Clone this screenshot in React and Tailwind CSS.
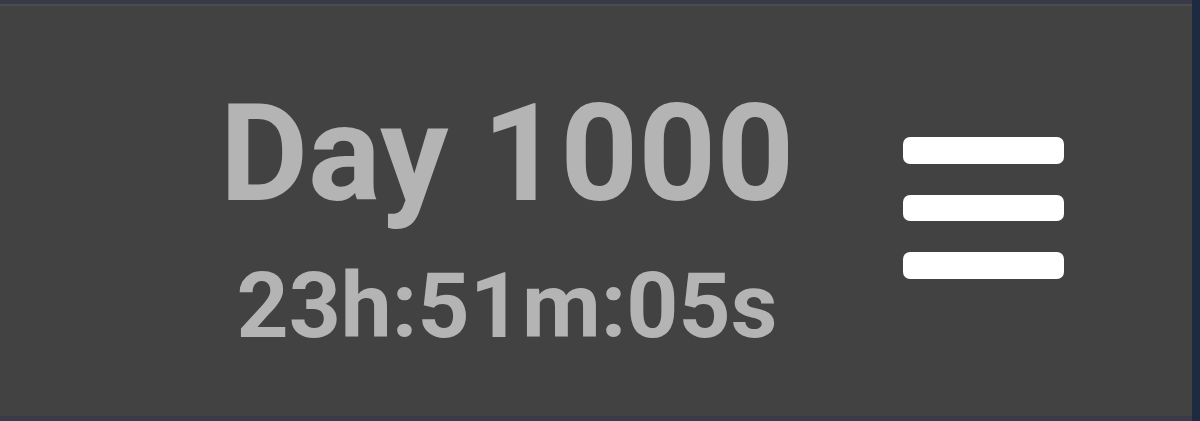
export default function App() {
  return (
    <div className="flex h-[421px] w-[1200px] overflow-hidden bg-[#1d2a40]">
      <div className="flex w-[1192px] flex-col">
        <div className="h-[4px] bg-[#383a47]" />
        <div className="h-[2px] bg-[#4b4b50]" />
        <div className="flex flex-1 items-start bg-[#424242] pl-[207px] font-['Roboto',sans-serif] font-bold">
          {/* day counter */}
          <div className="flex w-[600px] flex-col items-center pt-[80px] text-[#b4b4b4]">
            <div className="text-[136px] leading-none">Day 1000</div>
            <div className="mt-[39px] text-[91px] leading-none">23h:51m:05s</div>
          </div>

          {/* menu button */}
          <button className="ml-[96px] mt-[131px] flex w-[161px] flex-col gap-[31px]">
            <span className="block h-[27px] rounded-[7px] bg-white" />
            <span className="block h-[26px] rounded-[7px] bg-white" />
            <span className="block h-[27px] rounded-[7px] bg-white" />
          </button>
        </div>
        <div className="h-[5px] bg-[#3b3a4b]" />
      </div>
    </div>
  );
}
